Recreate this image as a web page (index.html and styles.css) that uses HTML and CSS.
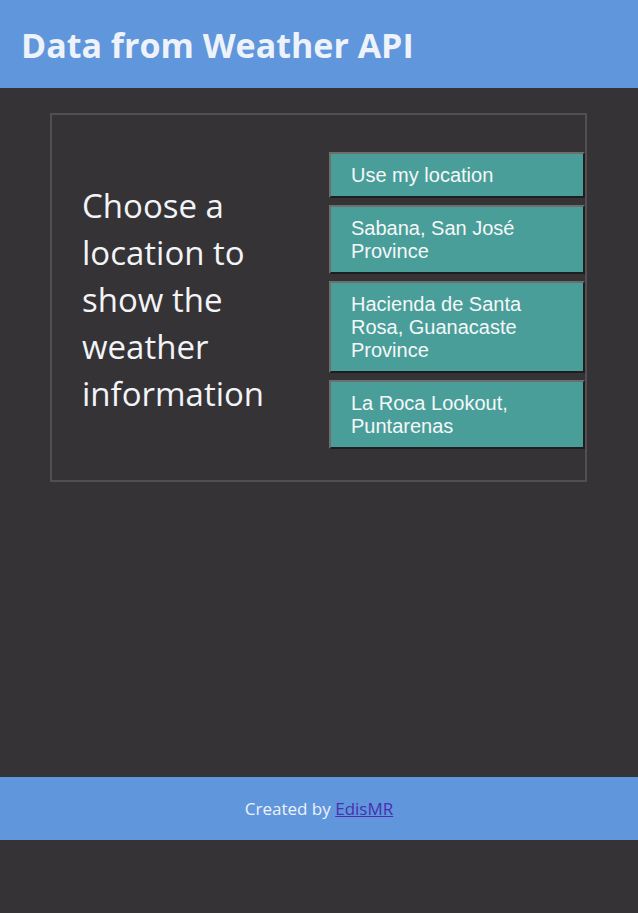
FILE: index.html
```html
<!DOCTYPE html>
<html lang="en">
<head>
<meta charset="utf-8">
<title>Weather API</title>
<link rel="stylesheet" href="styles.css">
</head>
<body>
<header class="top">
  <h1 class="title">Data from Weather API</h1>
</header>
<main class="main">
  <section class="card">
    <p class="prompt">Choose a location to show the weather information</p>
    <div class="choices">
      <button class="choice">Use my location</button>
      <button class="choice">Sabana, San José Province</button>
      <button class="choice">Hacienda de Santa Rosa, Guanacaste Province</button>
      <button class="choice">La Roca Lookout, Puntarenas</button>
    </div>
  </section>
</main>
<footer class="foot">
  <p class="credit">Created by <a class="link" href="#">EdisMR</a></p>
</footer>
</body>
</html>
```
FILE: styles.css
```css
html, body {
  margin: 0;
  padding: 0;
}
body {
  background: #353335;
  font-family: "Open Sans", "Noto Sans", sans-serif;
  color: #eef2fa;
  height: 913px;
}
.top {
  background: #6096dc;
  height: 88px;
  display: flex;
  align-items: center;
  padding-left: 21px;
}
.title {
  margin: 0;
  font-size: 34px;
  font-weight: 700;
  color: #eef2fa;
  position: relative;
  top: 1px;
}
.main {
  height: 689px;
  box-sizing: border-box;
  padding-top: 25px;
}
.card {
  margin: 0 50px 0 50px;
  width: 537px;
  box-sizing: border-box;
  border: 2px solid #505052;
  display: grid;
  grid-template-columns: 1fr 256px;
  align-items: center;
  padding: 37px 0 31px 30px;
}
.prompt {
  margin: 0;
  font-size: 33px;
  line-height: 47px;
  color: #f2f4f8;
  padding-right: 20px;
  position: relative;
  top: -1px;
}
.choices {
  display: flex;
  flex-direction: column;
  gap: 7px;
}
.choice {
  font-family: "Liberation Sans", Arial, sans-serif;
  font-size: 20px;
  line-height: 23px;
  text-align: left;
  color: #f4f8f8;
  background: #4a9e9a;
  border: 2px solid;
  border-color: #6e6e6e #1e1e1e #1e1e1e #6e6e6e;
  padding: 10px 20px 9px 20px;
  margin: 0;
}
.foot {
  background: #6096dc;
  height: 63px;
  display: flex;
  align-items: center;
  justify-content: center;
}
.credit {
  margin: 0;
  font-size: 17px;
  color: #eef2fa;
}
.link {
  color: #4a2fb0;
}
```
